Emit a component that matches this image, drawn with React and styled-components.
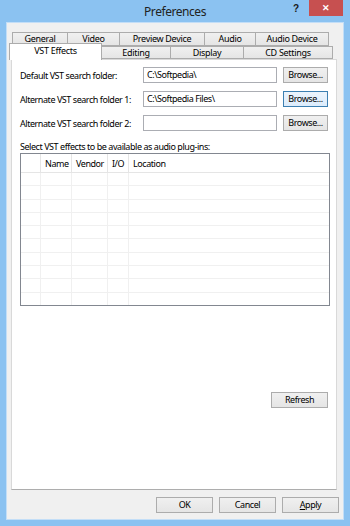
import React from "react"
import styled, { createGlobalStyle } from "styled-components"

const backTabs = [
  { label: "General", w: 56 },
  { label: "Video", w: 53 },
  { label: "Preview Device", w: 86 },
  { label: "Audio", w: 52 },
  { label: "Audio Device", w: 74 },
]

const frontTabs = [
  { label: "VST Effects", w: 93, active: true },
  { label: "Editing", w: 70 },
  { label: "Display", w: 74 },
  { label: "CD Settings", w: 90 },
]

const folders = [
  { label: "Default VST search folder:", value: "C:\\Softpedia\\" },
  { label: "Alternate VST search folder 1:", value: "C:\\Softpedia Files\\", focus: true },
  { label: "Alternate VST search folder 2:", value: "" },
]

const columns = [
  { label: "", w: 20 },
  { label: "Name", w: 31 },
  { label: "Vendor", w: 36 },
  { label: "I/O", w: 21 },
  { label: "Location", w: 0 },
]

const App = () => {
  return (
    <>
      <GlobalStyle />
      <Window>
        <TitleBar>
          <span />
          <Title>Preferences</Title>
          <Controls>
            <Help>?</Help>
            <Close>✕</Close>
          </Controls>
        </TitleBar>

        <Client>
          <Tabs>
            <TabRow $indent={6}>
              {backTabs.map((t) => (
                <Tab key={t.label} $w={t.w}>
                  {t.label}
                </Tab>
              ))}
            </TabRow>
            <TabRow $indent={3} $front>
              {frontTabs.map((t) => (
                <Tab key={t.label} $w={t.w} $active={t.active} $front>
                  {t.label}
                </Tab>
              ))}
            </TabRow>
          </Tabs>

          <Panel>
            {folders.map((f) => (
              <FolderRow key={f.label}>
                <FolderLabel>{f.label}</FolderLabel>
                <TextInput>{f.value}</TextInput>
                <Button $w={45} $focus={f.focus}>
                  Browse...
                </Button>
              </FolderRow>
            ))}

            <ListLabel>Select VST effects to be available as audio plug-ins:</ListLabel>

            <ListBox>
              <ListHeader>
                {columns.map((c, i) => (
                  <HeaderCell key={i} $w={c.w}>
                    {c.label}
                  </HeaderCell>
                ))}
              </ListHeader>
              {Array.from({ length: 10 }).map((_, r) => (
                <ListRow key={r}>
                  {columns.map((c, i) => (
                    <GridCell key={i} $w={c.w} />
                  ))}
                </ListRow>
              ))}
            </ListBox>

            <RefreshRow>
              <Button $w={57}>Refresh</Button>
            </RefreshRow>
          </Panel>

          <Footer>
            <Button $w={57}>OK</Button>
            <Button $w={57}>Cancel</Button>
            <Button $w={57}>
              <u>A</u>pply
            </Button>
          </Footer>
        </Client>
      </Window>
    </>
  )
}

export default App

const GlobalStyle = createGlobalStyle`
  html, body {
    margin: 0;
    padding: 0;
    background: #8bc2f1;
  }
  body {
    font-family: "Noto Sans", "Open Sans", sans-serif;
    font-size: 9px;
    letter-spacing: -0.45px;
    color: #000;
  }
`
const Window = styled.div`
  width: 350px;
  height: 526px;
  box-sizing: border-box;
  background: #8bc2f1;
  padding: 0 6px 6px;
  display: flex;
  flex-direction: column;
`
const TitleBar = styled.div`
  height: 22px;
  display: grid;
  grid-template-columns: 1fr auto 1fr;
  align-items: start;
`
const Title = styled.div`
  font-size: 12px;
  letter-spacing: -0.45px;
  line-height: 24px;
  color: #222;
`
const Controls = styled.div`
  display: flex;
  justify-content: flex-end;
  align-items: flex-start;
  margin-right: 1px;
`
const Help = styled.div`
  font-family: "Liberation Sans", sans-serif;
  font-weight: bold;
  font-size: 10px;
  line-height: 14px;
  letter-spacing: 0;
  margin: 2px 10px 0 0;
  color: #1a1a1a;
`
const Close = styled.div`
  width: 34px;
  height: 16px;
  background: #c75050;
  color: #fff;
  font-size: 9px;
  font-weight: bold;
  letter-spacing: 0;
  line-height: 16px;
  text-align: center;
`
const Client = styled.div`
  flex: 1;
  background: #f0f0f0;
  border: 1px solid #c3def7;
  display: flex;
  flex-direction: column;
`
const Tabs = styled.div`
  display: flex;
  flex-direction: column;
  padding-top: 9px;
`
const TabRow = styled.div`
  display: flex;
  padding-left: ${(p) => p.$indent}px;
  height: ${(p) => (p.$front ? 13 : 14)}px;
  align-items: flex-end;
`
const Tab = styled.div`
  position: relative;
  width: ${(p) => p.$w}px;
  box-sizing: border-box;
  height: ${(p) => (p.$active ? 17 : p.$front ? 13 : 14)}px;
  margin-bottom: ${(p) => (p.$active ? -1 : 0)}px;
  z-index: ${(p) => (p.$active ? 2 : 1)};
  border: 1px solid #acacac;
  border-bottom: ${(p) => (p.$active ? "none" : "1px solid #acacac")};
  margin-left: -1px;
  background: ${(p) =>
    p.$active ? "#fff" : "linear-gradient(#f0f0f0, #e5e5e5)"};
  text-align: center;
  font-size: 9px;
  letter-spacing: -0.3px;
  line-height: ${(p) => (p.$active ? 13 : 11)}px;
  white-space: nowrap;
`
const Panel = styled.div`
  margin-left: 4px;
  width: 326px;
  height: 431px;
  box-sizing: border-box;
  background: #fff;
  border: 1px solid #d9d9d9;
  border-bottom-color: #adadad;
  padding: 7px 8px 0 8px;
  display: flex;
  flex-direction: column;
`
const FolderRow = styled.div`
  display: flex;
  align-items: center;
  height: 16px;
  margin-bottom: 8px;
`
const FolderLabel = styled.div`
  width: 123px;
  white-space: nowrap;
`
const TextInput = styled.div`
  width: 134px;
  height: 16px;
  box-sizing: border-box;
  border: 1px solid #abadb3;
  padding-left: 3px;
  line-height: 14px;
  white-space: nowrap;
  overflow: hidden;
`
const Button = styled.div`
  width: ${(p) => p.$w}px;
  height: 16px;
  box-sizing: border-box;
  margin-left: 6px;
  border: 1px solid ${(p) => (p.$focus ? "#3c7fb1" : "#acacac")};
  background: ${(p) =>
    p.$focus
      ? "linear-gradient(#ecf4fc, #dcecfc)"
      : "linear-gradient(#f0f0f0, #e5e5e5)"};
  text-align: center;
  line-height: 14px;
  white-space: nowrap;
`
const ListLabel = styled.div`
  margin-top: 2px;
  height: 12px;
  line-height: 12px;
  white-space: nowrap;
`
const ListBox = styled.div`
  width: 310px;
  height: 153px;
  box-sizing: border-box;
  border: 1px solid #828790;
  overflow: hidden;
`
const ListHeader = styled.div`
  display: flex;
  height: 19px;
  border-bottom: 1px solid #e5e5e5;
  box-sizing: border-box;
`
const HeaderCell = styled.div`
  ${(p) => (p.$w ? `width: ${p.$w}px;` : "flex: 1;")}
  box-sizing: border-box;
  border-right: ${(p) => (p.$w ? "1px solid #e5e5e5" : "none")};
  padding-left: 4px;
  line-height: 19px;
  white-space: nowrap;
`
const ListRow = styled.div`
  display: flex;
  height: 13.3px;
  border-bottom: 1px solid #f0f0f0;
  box-sizing: border-box;
`
const GridCell = styled.div`
  ${(p) => (p.$w ? `width: ${p.$w}px;` : "flex: 1;")}
  box-sizing: border-box;
  border-right: ${(p) => (p.$w ? "1px solid #f0f0f0" : "none")};
`
const RefreshRow = styled.div`
  display: flex;
  justify-content: flex-end;
  padding-right: 0;
  margin-top: 86px;
`
const Footer = styled.div`
  display: flex;
  justify-content: flex-end;
  padding: 7px 4px 0 0;
`
